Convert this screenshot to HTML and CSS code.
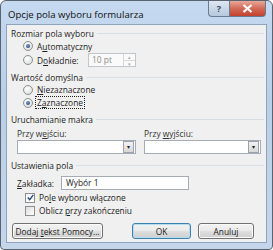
FILE: index.html
```html
<!DOCTYPE html>
<html lang="pl">
<head>
  <meta charset="UTF-8">
  <title>Opcje pola wyboru formularza</title>
  <link rel="stylesheet" href="styles.css">
</head>
<body>
  <div id="window">
    <div id="title-bar">
      <span id="title">Opcje pola wyboru formularza</span>
      <div id="caption-btns">
        <span class="cap-btn cap-help">?</span>
        <span class="cap-btn cap-close">
          <svg width="11" height="9" viewBox="0 0 11 9"><path d="M1.5 1 L9.5 8 M9.5 1 L1.5 8" stroke="#fff" stroke-width="2.2"/></svg>
        </span>
      </div>
    </div>
    <div id="client">
      <div class="group-head"><span>Rozmiar pola wyboru</span><i></i></div>
      <div class="row opt">
        <span class="radio on"></span><span>A<u>u</u>tomatyczny</span>
      </div>
      <div class="row opt">
        <span class="radio"></span><span class="opt-label">D<u>o</u>kładnie:</span>
        <span class="spin-box"><span class="spin-text">10 pt</span><span class="spin-arrows"><b>&#9652;</b><b>&#9662;</b></span></span>
      </div>

      <div class="group-head gap"><span>Wartość domyślna</span><i></i></div>
      <div class="row opt small">
        <span class="radio"></span><span><u>N</u>iezaznaczone</span>
      </div>
      <div class="row opt small">
        <span class="radio on"></span><span class="focus">Z<u>a</u>znaczone</span>
      </div>

      <div class="group-head gap"><span>Uruchamianie makra</span><i></i></div>
      <div class="macro-cols">
        <div class="macro-col">
          <div class="sub-label">Przy w<u>e</u>jściu:</div>
          <div class="combo"><span class="combo-btn">&#9662;</span></div>
        </div>
        <div class="macro-col">
          <div class="sub-label">Przy <u>w</u>yjściu:</div>
          <div class="combo"><span class="combo-btn">&#9662;</span></div>
        </div>
      </div>

      <div class="group-head gap-lg"><span>Ustawienia pola</span><i></i></div>
      <div class="row field-row">
        <span class="field-label"><u>Z</u>akładka:</span>
        <span class="text-box">Wybór 1</span>
      </div>
      <div class="row opt small">
        <span class="check on">
          <svg width="7" height="7" viewBox="0 0 7 7"><path d="M0.8 3.6 L2.7 5.6 L6.3 0.9" fill="none" stroke="#2b4a78" stroke-width="1.4"/></svg>
        </span><span>Po<u>l</u>e wyboru włączone</span>
      </div>
      <div class="row opt small">
        <span class="check"></span><span>Oblicz <u>p</u>rzy zakończeniu</span>
      </div>

      <div id="button-row">
        <button class="btn btn-help">Dodaj <u>t</u>ekst Pomocy...</button>
        <button class="btn btn-default">OK</button>
        <button class="btn">Anuluj</button>
      </div>
    </div>
  </div>
</body>
</html>
```

FILE: styles.css
```css
body {
  margin: 0;
  font-family: 'Open Sans', 'Noto Sans', sans-serif;
  background-color: #ffffff;
}

#window {
  width: 273px;
  height: 250px;
  box-sizing: border-box;
  border: 1px solid #5a6470;
  border-radius: 6px 6px 4px 4px;
  background: linear-gradient(to bottom, #c5d9f0 0%, #b9cfe8 40%, #c4d6ea 100%);
  padding: 0 5px 6px 5px;
  display: flex;
  flex-direction: column;
}

#title-bar {
  height: 23px;
  display: flex;
  align-items: flex-start;
  justify-content: space-between;
}

#title {
  font-size: 9.6px;
  color: #111;
  margin: 7px 0 0 2px;
}

#caption-btns {
  display: flex;
  margin-right: 1px;
}

.cap-btn {
  height: 16px;
  display: flex;
  align-items: center;
  justify-content: center;
  border: 1px solid #6c7c90;
  border-top: none;
  box-sizing: border-box;
}

.cap-help {
  width: 21px;
  border-radius: 0 0 0 4px;
  border-right: none;
  background: linear-gradient(to bottom, #dfe8f2 0%, #c9d7e6 50%, #b6c8dc 100%);
  color: #3a4a5e;
  font-size: 9px;
  font-weight: bold;
}

.cap-close {
  width: 37px;
  border-radius: 0 0 4px 0;
  background: linear-gradient(to bottom, #e9a898 0%, #d26a58 50%, #c2412c 100%);
}

#client {
  flex: 1;
  background-color: #f0f0f0;
  border: 1px solid #8ea3bd;
  padding: 2px 0 0 4px;
  font-size: 8.4px;
  color: #222;
}

.group-head {
  height: 12px;
  display: flex;
  align-items: center;
}

.group-head span {
  white-space: nowrap;
  margin-right: 3px;
}

.group-head i {
  flex: 1;
  height: 1px;
  background-color: #d5dfe5;
  margin-right: 2px;
}

.gap {
  margin-top: 4px;
}

.gap-lg {
  margin-top: 5px;
}

.row {
  display: flex;
  align-items: center;
}

.opt {
  height: 14px;
  padding-left: 12px;
}

.opt.small {
  height: 13px;
}

.radio {
  width: 8px;
  height: 8px;
  border-radius: 50%;
  border: 1px solid #8e8f8f;
  background: radial-gradient(circle at 40% 35%, #ffffff 0%, #e2e3e4 70%, #cfd0d2 100%);
  margin-right: 4px;
  box-sizing: content-box;
  position: relative;
}

.radio.on::after {
  content: '';
  position: absolute;
  left: 2px;
  top: 2px;
  width: 4px;
  height: 4px;
  border-radius: 50%;
  background: radial-gradient(circle at 40% 35%, #7fa0c8 0%, #2c4f7c 70%, #1e3b61 100%);
}

.check {
  width: 8px;
  height: 8px;
  border: 1px solid #8e8f8f;
  background: linear-gradient(to bottom right, #dcdcdc, #ffffff);
  margin-left: 2px;
  margin-right: 4px;
  display: flex;
  align-items: center;
  justify-content: center;
}

.check.on {
  background: linear-gradient(to bottom right, #eef2f6, #ffffff);
}

.opt-label {
  width: 51px;
}

.spin-box {
  display: flex;
  height: 14px;
  width: 48px;
  border: 1px solid #c0c6cc;
  box-sizing: border-box;
  background-color: #fafafa;
}

.spin-text {
  flex: 1;
  color: #8d8d8d;
  padding-left: 3px;
  line-height: 12px;
}

.spin-arrows {
  width: 11px;
  display: flex;
  flex-direction: column;
  border-left: 1px solid #d5d9dd;
}

.spin-arrows b {
  flex: 1;
  font-size: 5px;
  line-height: 6px;
  text-align: center;
  color: #a8a8a8;
  font-weight: normal;
}

.spin-arrows b + b {
  border-top: 1px solid #d5d9dd;
}

.focus {
  outline: 1px dotted #222;
  outline-offset: 0;
  padding: 0 1px;
  margin-left: -1px;
  line-height: 11px;
}

.macro-cols {
  display: flex;
  gap: 8px;
  padding-left: 6px;
  margin-top: 3px;
}

.macro-col {
  width: 119px;
}

.macro-col + .macro-col {
  width: 117px;
}

.sub-label {
  height: 12px;
  line-height: 11px;
  color: #333;
}

.combo {
  height: 14px;
  border: 1px solid #a5acb5;
  background-color: #ffffff;
  box-sizing: border-box;
  display: flex;
  justify-content: flex-end;
  align-items: center;
  padding-right: 1px;
}

.combo-btn {
  width: 9px;
  height: 10px;
  border: 1px solid #9aa3ad;
  background: linear-gradient(to bottom, #f2f2f2, #d8d8d8);
  font-size: 6px;
  line-height: 10px;
  text-align: center;
  color: #222;
}

.field-row {
  height: 14px;
  padding-left: 6px;
  margin-top: 5px;
  margin-bottom: 1px;
}

.field-label {
  width: 44px;
}

.text-box {
  width: 128px;
  height: 14px;
  box-sizing: border-box;
  border: 1px solid #a5acb5;
  background-color: #ffffff;
  padding-left: 4px;
  line-height: 12px;
}

#button-row {
  display: flex;
  margin-top: 6px;
  padding-left: 1px;
}

.btn {
  height: 16px;
  font-family: inherit;
  font-size: 8.4px;
  color: #1a1a1a;
  border: 1px solid #707070;
  border-radius: 3px;
  background: linear-gradient(to bottom, #f2f2f2 0%, #ebebeb 45%, #dddddd 55%, #cfcfcf 100%);
  padding: 0;
  width: 56px;
  margin-left: 7px;
  box-shadow: inset 0 0 0 1px #fbfbfb;
}

.btn-help {
  width: 91px;
  margin-left: 0;
  margin-right: 29px;
}

.btn-default {
  width: 59px;
  margin-left: 0;
  border-color: #3c7fb1;
  box-shadow: inset 0 0 0 1px #b6dcef;
}
```
